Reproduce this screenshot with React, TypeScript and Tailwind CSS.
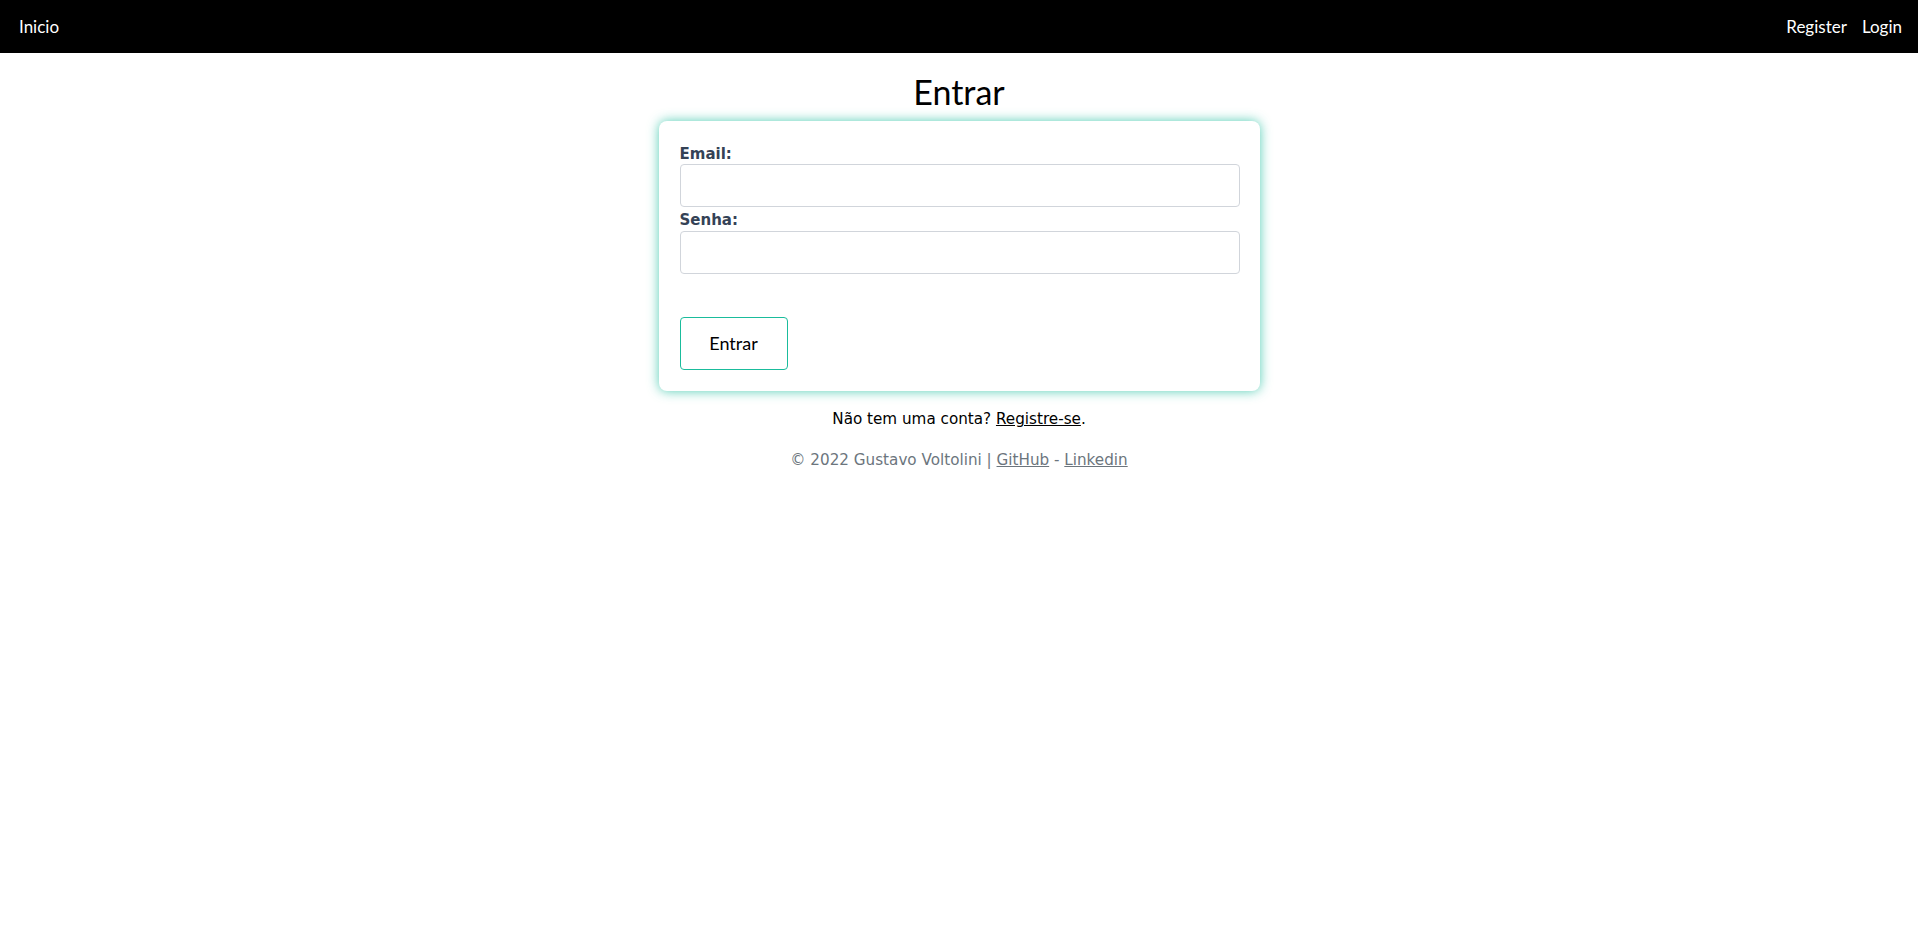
import React from "react";

export default function App() {
  return (
    <div className="min-h-[937px] bg-white font-['DejaVu_Sans',Verdana,sans-serif] text-black">
      {/* Top navigation */}
      <nav className="flex h-[53px] items-center justify-between bg-black pl-[19px] pr-[16px] font-['Lato',sans-serif] text-[17px] leading-[20px] text-white">
        <a href="#">Inicio</a>
        <div className="flex gap-[15px]">
          <a href="#">Register</a>
          <a href="#">Login</a>
        </div>
      </nav>

      <main className="flex flex-col items-center">
        <h1 className="mt-[19px] font-['Lato',sans-serif] text-[34px] font-normal leading-[40px]">Entrar</h1>

        {/* Login card */}
        <form
          className="mt-[9px] flex w-[601px] flex-col rounded-[8px] bg-white pb-[21px] pl-[21px] pr-[20px] pt-[24px] shadow-[0_0_12px_rgba(26,188,156,0.75)]"
          onSubmit={e => e.preventDefault()}
        >
          <label htmlFor="email" className="text-[15px] font-bold leading-[18px] text-[#344256]">
            Email:
          </label>
          <input
            id="email"
            type="email"
            className="mt-[1px] h-[43px] w-full rounded-[4px] border border-[#d1d5db] px-3 outline-none"
          />
          <label htmlFor="senha" className="mt-[4px] text-[15px] font-bold leading-[18px] text-[#344256]">
            Senha:
          </label>
          <input
            id="senha"
            type="password"
            className="mt-[2px] h-[43px] w-full rounded-[4px] border border-[#d1d5db] px-3 outline-none"
          />
          <button
            type="submit"
            className="mt-[43px] h-[53px] w-[108px] rounded-[4px] border border-[#1abc9c] bg-white font-['Lato',sans-serif] text-[18px] text-black"
          >
            Entrar
          </button>
        </form>

        <p className="mt-[19px] text-[15.2px] leading-[18px]">
          Não tem uma conta?{" "}
          <a href="#" className="underline">
            Registre-se
          </a>
          .
        </p>

        <footer className="mt-[23px] text-[15.2px] leading-[18px] text-[#6c757d]">
          © 2022 Gustavo Voltolini |{" "}
          <a href="#" className="underline">
            GitHub
          </a>{" "}
          -{" "}
          <a href="#" className="underline">
            Linkedin
          </a>
        </footer>
      </main>
    </div>
  );
}
